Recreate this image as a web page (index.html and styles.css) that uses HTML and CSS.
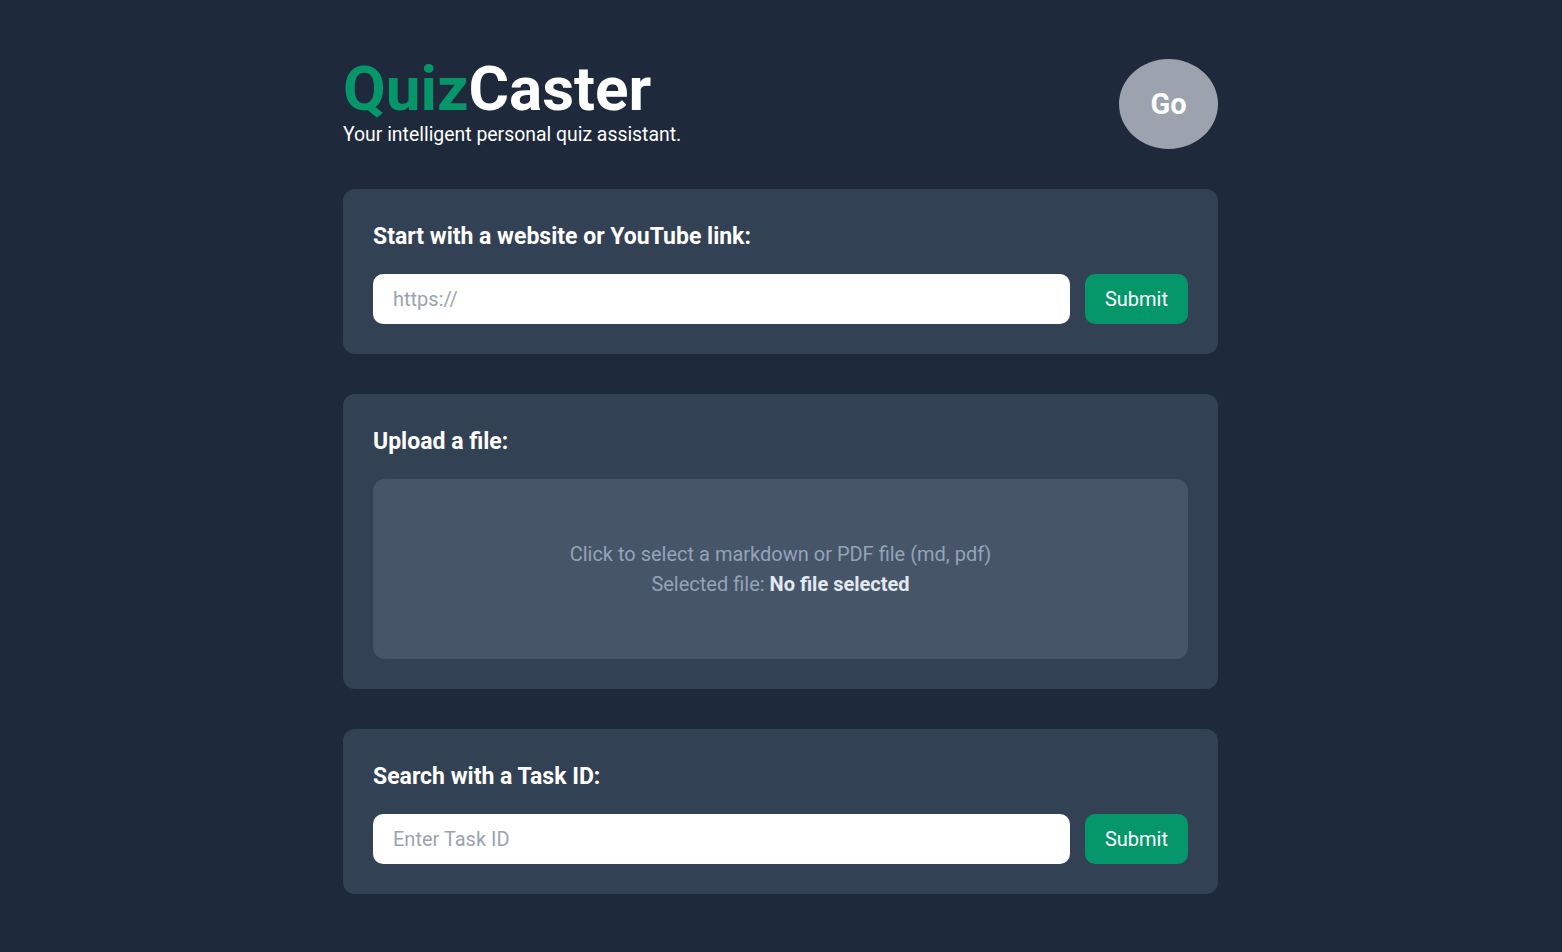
FILE: index.html
```html
<!DOCTYPE html>
<html lang="en">
<head>
<meta charset="utf-8">
<title>QuizCaster</title>
<link rel="stylesheet" href="styles.css">
</head>
<body>
<main class="container">
  <header class="header">
    <div class="brand">
      <h1 class="logo"><span class="logo-accent">Quiz</span>Caster</h1>
      <p class="tagline">Your intelligent personal quiz assistant.</p>
    </div>
    <button class="go-btn" type="button">Go</button>
  </header>

  <section class="card">
    <h2 class="card-title">Start with a website or YouTube link:</h2>
    <form class="row">
      <input class="text-input" type="text" placeholder="https://">
      <button class="submit-btn" type="button">Submit</button>
    </form>
  </section>

  <section class="card">
    <h2 class="card-title">Upload a file:</h2>
    <label class="dropzone">
      <span class="drop-line">Click to select a markdown or PDF file (md, pdf)</span>
      <span class="drop-line">Selected file: <strong class="drop-file">No file selected</strong></span>
    </label>
  </section>

  <section class="card">
    <h2 class="card-title">Search with a Task ID:</h2>
    <form class="row">
      <input class="text-input" type="text" placeholder="Enter Task ID">
      <button class="submit-btn" type="button">Submit</button>
    </form>
  </section>
</main>
</body>
</html>
```

FILE: styles.css
```css
* { box-sizing: border-box; }

html, body {
  margin: 0;
  padding: 0;
  background: #1e293b;
  font-family: Roboto, "Liberation Sans", Arial, sans-serif;
  color: #ffffff;
}

body { padding-right: 1px; }

.container {
  width: 875px;
  margin: 0 auto;
  padding-top: 59px;
  display: flex;
  flex-direction: column;
  gap: 40px;
}

.header {
  display: flex;
  justify-content: space-between;
  align-items: flex-start;
}

.logo {
  margin: 0;
  font-size: 62px;
  line-height: 60px;
  font-weight: 700;
  color: #ffffff;
}

.logo-accent { color: #059669; }

.tagline {
  margin: 0;
  padding-top: 1px;
  font-size: 19.4px;
  line-height: 29px;
  color: #ffffff;
}

.go-btn {
  width: 99px;
  height: 90px;
  border: none;
  border-radius: 50%;
  background: #9ca3af;
  color: #ffffff;
  font-family: inherit;
  font-size: 29px;
  font-weight: 700;
  padding: 0;
}

.card {
  background: #334155;
  border-radius: 12px;
  padding: 30px;
}

.card-title {
  margin: 0 0 19px 0;
  font-size: 23px;
  line-height: 36px;
  font-weight: 700;
  color: #ffffff;
}

.row {
  display: flex;
  gap: 15px;
  margin: 0;
}

.text-input {
  flex: 1;
  height: 50px;
  border: none;
  border-radius: 10px;
  background: #ffffff;
  padding: 0 20px;
  font-family: inherit;
  font-size: 20px;
  color: #1e293b;
  outline: none;
}

.text-input::placeholder { color: #9ca3af; }

.submit-btn {
  width: 103px;
  height: 50px;
  border: none;
  border-radius: 10px;
  background: #059669;
  color: #ffffff;
  font-family: inherit;
  font-size: 20px;
  font-weight: 400;
  padding: 0;
}

.dropzone {
  height: 180px;
  border-radius: 12px;
  background: #475569;
  display: flex;
  flex-direction: column;
  align-items: center;
  justify-content: center;
  color: #94a3b8;
  font-size: 20px;
  line-height: 30px;
}

.drop-file {
  color: #e2e8f0;
  font-weight: 700;
}
```
